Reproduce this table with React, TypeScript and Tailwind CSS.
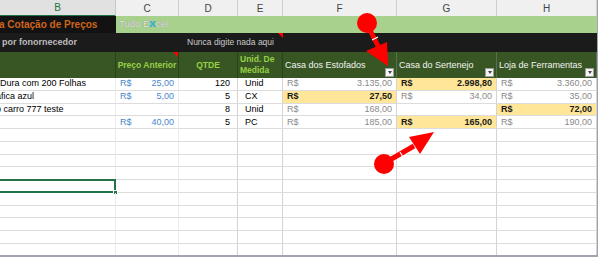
const COLS = 'grid grid-cols-[116px_63px_59px_45px_114px_100px_100px]'

type Tone = 'blue' | 'gray' | 'best'
type Money = { v: string; tone: Tone } | null

const ROWS: { b: string; bShift: string; c: Money; d: string; e: string; f: Money; g: Money; h: Money }[] = [
  {
    b: 'Dura com 200 Folhas',
    bShift: 'ml-0',
    c: { v: '25,00', tone: 'blue' },
    d: '120',
    e: 'Unid',
    f: { v: '3.135,00', tone: 'gray' },
    g: { v: '2.998,80', tone: 'best' },
    h: { v: '3.360,00', tone: 'gray' },
  },
  {
    b: 'gráfica azul',
    bShift: 'ml-[-12px]',
    c: { v: '5,00', tone: 'blue' },
    d: '5',
    e: 'CX',
    f: { v: '27,50', tone: 'best' },
    g: { v: '34,00', tone: 'gray' },
    h: { v: '35,00', tone: 'gray' },
  },
  {
    b: 'o carro 777 teste',
    bShift: 'ml-[-4px]',
    c: null,
    d: '8',
    e: 'Unid',
    f: { v: '168,00', tone: 'gray' },
    g: null,
    h: { v: '72,00', tone: 'best' },
  },
  {
    b: '',
    bShift: 'ml-0',
    c: { v: '40,00', tone: 'blue' },
    d: '5',
    e: 'PC',
    f: { v: '185,00', tone: 'gray' },
    g: { v: '165,00', tone: 'best' },
    h: { v: '190,00', tone: 'gray' },
  },
]

const EMPTY_ROWS = 10
const SELECTED = 8

function MoneyCell({ m, edge }: { m: Money; edge: string }) {
  if (!m) return <div className={`h-[12.75px] border-b border-b-[#dcdcdc] border-r ${edge}`} />
  const bg = m.tone === 'best' ? 'bg-[#ffe699]' : 'bg-white'
  const color =
    m.tone === 'blue' ? 'text-[#4a86c8]' : m.tone === 'gray' ? 'text-[#8a8a8a]' : 'text-[#1a1a1a] font-bold'
  return (
    <div
      className={`flex h-[12.75px] items-center justify-between border-b border-b-[#dcdcdc] border-r px-[4px] leading-none ${edge} ${bg} ${color}`}
    >
      <span>R$</span>
      <span>{m.v}</span>
    </div>
  )
}

function FilterButton() {
  return (
    <span className="absolute bottom-[1px] right-[2px] flex h-[9px] w-[9px] items-center justify-center border border-[#9c9c9c] bg-[#f4f4f4]">
      <span className="h-0 w-0 border-x-[2px] border-t-[3px] border-x-transparent border-t-[#444]" />
    </span>
  )
}

function CommentMark() {
  return (
    <span className="absolute right-0 top-0 h-0 w-0 border-l-[5px] border-t-[5px] border-l-transparent border-t-[#ff0000]" />
  )
}

function Arrows() {
  return (
    <svg className="pointer-events-none absolute left-0 top-0" width="600" height="259" viewBox="0 0 600 259">
      <circle cx="367" cy="23" r="10" fill="#ff0000" />
      <line x1="369" y1="28" x2="379" y2="48" stroke="#ff0000" strokeWidth="5" />
      <line x1="372" y1="40" x2="378" y2="37" stroke="#ffffff" strokeWidth="1.2" />
      <polygon points="366,51 387,42 388,66" fill="#ff0000" />

      <circle cx="384" cy="164" r="10" fill="#ff0000" />
      <line x1="388" y1="161" x2="414" y2="146" stroke="#ff0000" strokeWidth="5" />
      <line x1="400" y1="152" x2="403" y2="157" stroke="#ffffff" strokeWidth="1.2" />
      <polygon points="409,137 434,132 420,154" fill="#ff0000" />
    </svg>
  )
}

export default function App() {
  return (
    <div className="relative h-[259px] w-[600px] overflow-hidden bg-white font-['Liberation_Sans',Arial,sans-serif] text-[9px] text-black">
      <div className="h-[257px] w-[598px] overflow-hidden border-b-2 border-r border-[#a3a3b3]">
        {/* column letters */}
        <div className={`${COLS} h-[16px] text-[10px] text-[#444]`}>
          <div className="flex items-center justify-center border-b-2 border-r border-b-[#217346] border-r-[#c6c6c6] bg-[#e1e1e1] text-[#217346]">
            B
          </div>
          {['C', 'D', 'E', 'F', 'G', 'H'].map((l) => (
            <div key={l} className="flex items-center justify-center border-b border-r border-[#cfcfcf] bg-[#f0f0f0]">
              {l}
            </div>
          ))}
        </div>

        {/* title row */}
        <div className="flex h-[17px]">
          <div className="flex w-[116px] items-center overflow-hidden bg-[#121212] text-[10px] font-bold text-[#d0641c]">
            <span className="ml-[-1px] whitespace-nowrap">a Cotação de Preços</span>
          </div>
          <div className="flex flex-1 items-center bg-[#a9d18e] pl-[3px] text-[9.5px] text-[#e4e4e4] [text-shadow:0_0_1px_#7a7a7a]">
            Tudo E<span className="font-bold text-[#19c3e8]">X</span>cel
          </div>
        </div>

        {/* notice row */}
        <div className="relative flex h-[19px] items-center bg-[#1b1b1b]">
          <span className="ml-[2px] w-[185px] whitespace-nowrap font-bold text-[#bdbdbd]">por fonornecedor</span>
          <span className="whitespace-nowrap text-[8.5px] text-[#c9c9c9]">Nunca digite nada aqui</span>
          <span className="absolute left-[278px] top-0 h-0 w-0 border-l-[5px] border-t-[5px] border-l-transparent border-t-[#ff0000]" />
        </div>

        {/* table header */}
        <div className={`${COLS} h-[26px] bg-[#375623] text-[8.5px] leading-[11px]`}>
          <div className="border-r border-[#2a4219]" />
          <div className="relative flex items-center justify-center whitespace-nowrap border-r border-[#2a4219] font-bold text-[#98cf47]">
            Preço Anterior
            <CommentMark />
          </div>
          <div className="flex items-center justify-center border-r border-[#2a4219] font-bold text-[#98cf47]">QTDE</div>
          <div className="flex flex-col justify-center border-r border-[#2a4219] pl-[2px] font-bold text-[#98cf47]">
            <span>Unid. De</span>
            <span>Medida</span>
          </div>
          {['Casa dos Estofados', 'Casa do Sertenejo', 'Loja de Ferramentas'].map((t) => (
            <div
              key={t}
              className="relative flex items-center whitespace-nowrap border-r border-[#5b6f4c] pl-[2px] text-[9px] text-[#f2f2f2]"
            >
              {t}
              <FilterButton />
            </div>
          ))}
        </div>

        {/* data rows */}
        {ROWS.map((r, i) => (
          <div key={i} className={`${COLS} h-[12.75px] leading-none`}>
            <div className="flex items-center overflow-hidden whitespace-nowrap border-b border-r border-b-[#dcdcdc] border-r-[#ececec]">
              <span className={r.bShift}>{r.b}</span>
            </div>
            <MoneyCell m={r.c} edge="border-r-[#ececec]" />
            <div className="flex items-center justify-end border-b border-r border-b-[#dcdcdc] border-r-[#d4d4d4] pr-[7px]">
              {r.d}
            </div>
            <div className="flex items-center border-b border-r border-b-[#dcdcdc] border-r-[#d4d4d4] pl-[7px]">{r.e}</div>
            <MoneyCell m={r.f} edge="border-r-[#d4d4d4]" />
            <MoneyCell m={r.g} edge="border-r-[#d4d4d4]" />
            <MoneyCell m={r.h} edge="border-r-[#d4d4d4]" />
          </div>
        ))}
        {Array.from({ length: EMPTY_ROWS }).map((_, i) => (
          <div key={`e${i}`} className={`${COLS} h-[12.75px]`}>
            <div className="relative border-b border-r border-b-[#dcdcdc] border-r-[#ececec]">
              {i + ROWS.length === SELECTED && (
                <>
                  <span className="absolute -left-[4px] -right-[1px] -top-[1px] bottom-[-1px] border-2 border-[#217346]" />
                  <span className="absolute -bottom-[3px] -right-[3px] h-[5px] w-[5px] border border-white bg-[#217346]" />
                </>
              )}
            </div>
            <div className="border-b border-r border-b-[#dcdcdc] border-r-[#ececec]" />
            <div className="border-b border-r border-b-[#dcdcdc] border-r-[#d4d4d4]" />
            <div className="border-b border-r border-b-[#dcdcdc] border-r-[#d4d4d4]" />
            <div className="border-b border-r border-b-[#dcdcdc] border-r-[#d4d4d4]" />
            <div className="border-b border-r border-b-[#dcdcdc] border-r-[#d4d4d4]" />
            <div className="border-b border-r border-b-[#dcdcdc] border-r-[#d4d4d4]" />
          </div>
        ))}
      </div>
      <Arrows />
    </div>
  )
}
